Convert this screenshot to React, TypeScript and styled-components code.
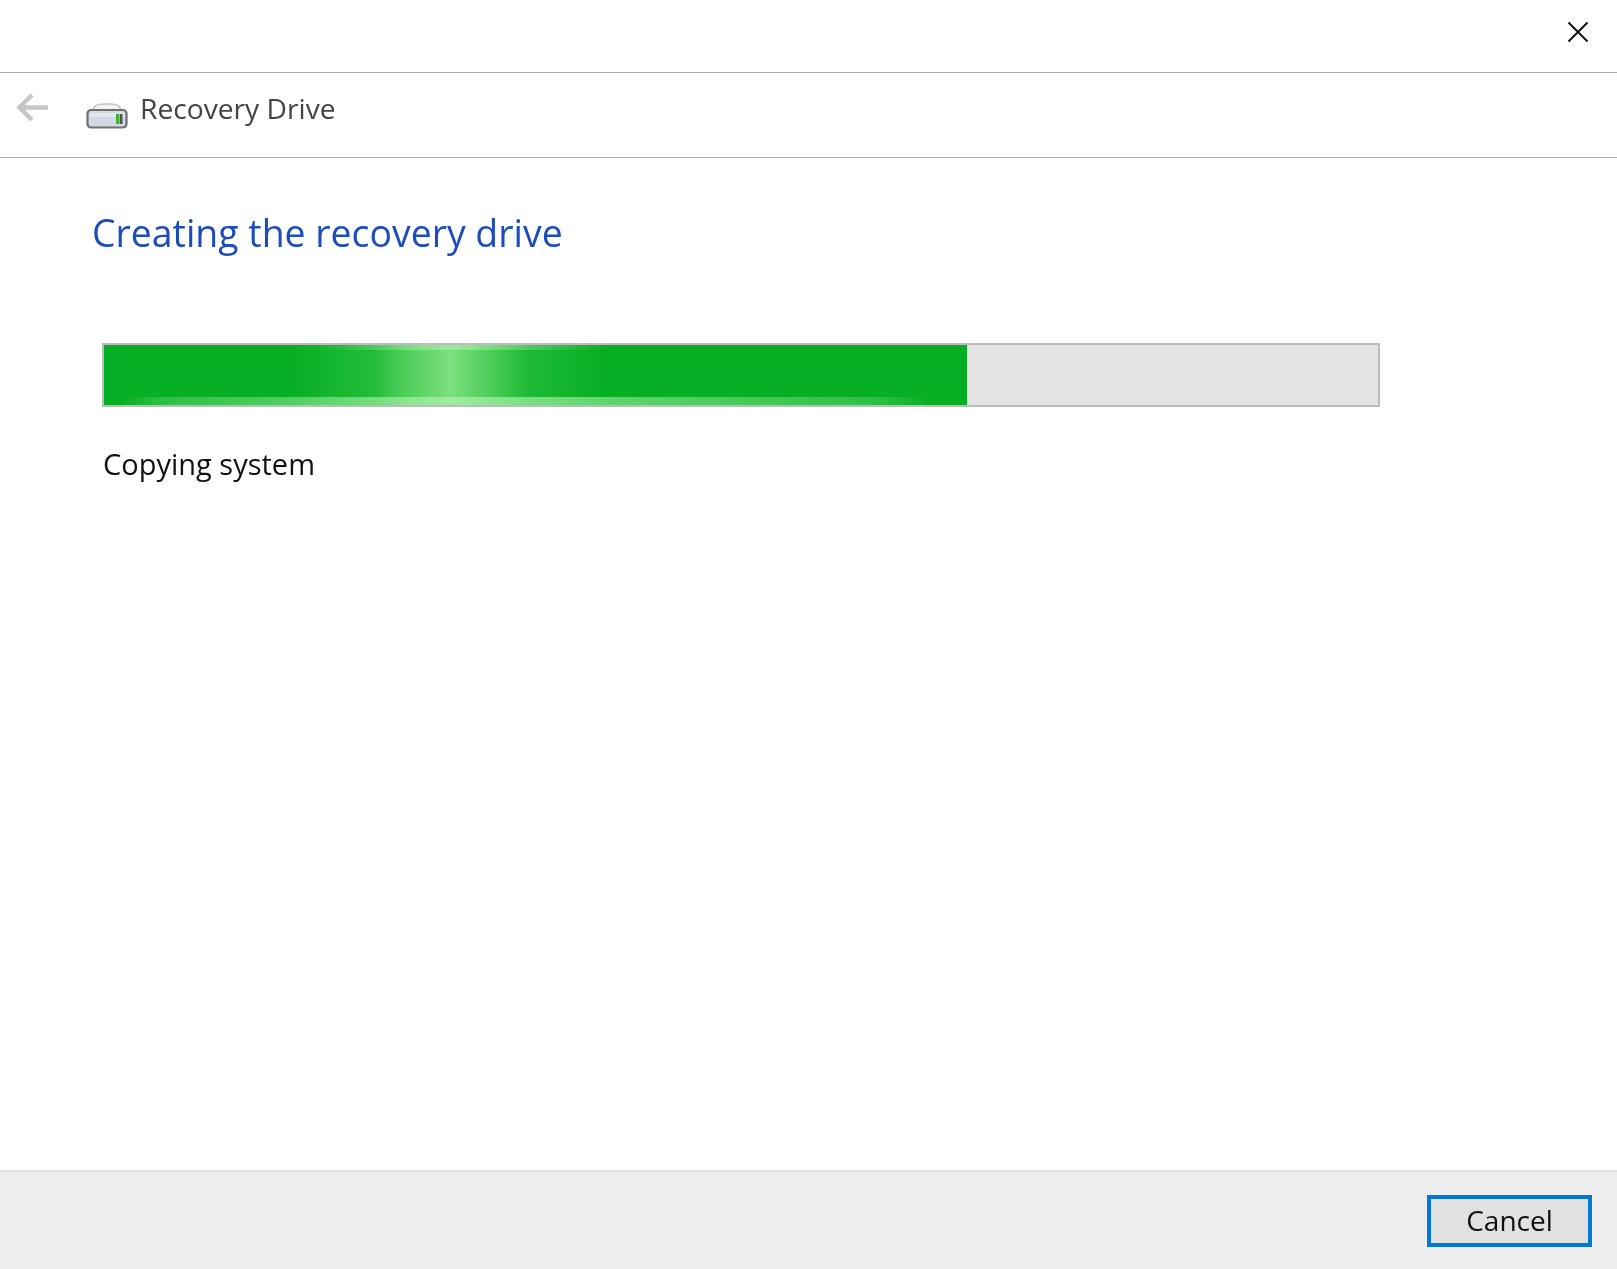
import React, { ReactElement } from 'react';
import styled, { createGlobalStyle } from 'styled-components';

const GlobalStyle = createGlobalStyle`
  html, body {
    margin: 0;
    padding: 0;
    background: #fff;
  }
`;

const Window = styled.div`
  width: 1617px;
  height: 1269px;
  display: flex;
  flex-direction: column;
  overflow: hidden;
  background: #fff;
  font-family: "Open Sans", "Noto Sans", sans-serif;
`;

const TitleBar = styled.header`
  height: 73px;
  flex: none;
  box-sizing: border-box;
  display: flex;
  justify-content: flex-end;
  align-items: center;
  padding: 0 28px 9px 0;
  border-bottom: 1px solid #aeaeae;
`;

const NavBar = styled.nav`
  height: 85px;
  flex: none;
  box-sizing: border-box;
  display: flex;
  align-items: flex-start;
  padding: 18px 0 0 16px;
  border-bottom: 1px solid #aeaeae;
`;

const BackIcon = styled.svg`
  margin: 1px 0 0;
  filter: blur(0.6px);
`;

const DriveIcon = styled.svg`
  margin: 12px 0 0 36px;
  filter: blur(0.7px);
`;

const WindowName = styled.span`
  margin: 0 0 0 12px;
  font-size: 28.2px;
  line-height: 34px;
  color: #444;
  filter: blur(0.6px);
`;

const Body = styled.main`
  flex: 1;
  display: flex;
  flex-direction: column;
  padding: 51px 0 0 92px;
`;

const Heading = styled.h1`
  margin: 0;
  font-size: 37.4px;
  line-height: 48px;
  font-weight: 400;
  color: #1d4dbd;
  filter: blur(0.6px);
`;

const Track = styled.div`
  margin: 86px 0 0 10px;
  width: 1278px;
  height: 64px;
  box-sizing: border-box;
  border: 2px solid #bcbcbc;
  background: #e4e4e4;
`;

const Fill = styled.div`
  height: 100%;
  filter: blur(0.6px);
  background:
    linear-gradient(90deg, transparent 215px, rgba(160, 240, 160, 0.7) 346px, transparent 500px) top / 100% 5px no-repeat,
    linear-gradient(90deg, transparent 18px, rgba(140, 230, 140, 0.3) 60px, rgba(170, 240, 170, 0.75) 346px, rgba(140, 230, 140, 0.3) 770px, transparent 825px) bottom / 100% 8px no-repeat,
    linear-gradient(90deg, transparent 190px, rgba(125, 225, 125, 0.25) 270px, rgba(125, 225, 125, 0.6) 300px, #7de07e 346px, rgba(125, 225, 125, 0.6) 385px, rgba(125, 225, 125, 0.2) 425px, transparent 500px),
    #07af24;
`;

const Status = styled.p`
  margin: 38px 0 0 11px;
  font-size: 29px;
  line-height: 38px;
  color: #111;
  filter: blur(0.5px);
`;

const Footer = styled.footer`
  height: 99px;
  flex: none;
  box-sizing: border-box;
  display: flex;
  justify-content: flex-end;
  align-items: flex-start;
  padding: 23px 25px 0 0;
  background: #eeeeee;
  border-top: 2px solid #e0e0e0;
`;

const CancelButton = styled.button`
  width: 165px;
  height: 52px;
  box-sizing: border-box;
  padding: 0 0 2px;
  border: 4px solid #0078d7;
  background: #e1e1e1;
  font-family: inherit;
  font-size: 28px;
  color: #111;
`;

const ButtonLabel = styled.span`
  display: block;
  filter: blur(0.5px);
`;

const App = (): ReactElement => (
  <Window>
    <GlobalStyle />
    <TitleBar>
      <svg width="22" height="22" viewBox="0 0 22 22" aria-label="Close">
        <path d="M1.5 1.5 20.5 20.5M20.5 1.5 1.5 20.5" stroke="#111" strokeWidth="2" fill="none" />
      </svg>
    </TitleBar>
    <NavBar>
      <BackIcon width="34" height="32" viewBox="0 0 34 32" aria-label="Back">
        <path
          d="M32 15.5H4M16 3 3.5 15.5 16 28"
          stroke="#c6c6c6"
          strokeWidth="4.5"
          fill="none"
        />
      </BackIcon>
      <DriveIcon width="42" height="26" viewBox="0 0 42 26">
        <path d="M7 7C8 2 12 1 21 1s13 1 14 6" fill="#f3f3f3" stroke="#c4c4c4" strokeWidth="1.5" />
        <rect x="1.5" y="7" width="39" height="17.5" rx="3.5" fill="#d4d7e4" stroke="#707070" strokeWidth="2.2" />
        <rect x="4" y="10" width="34" height="4" fill="#e6e8f2" />
        <rect x="30" y="11" width="3.5" height="10" fill="#3fb52d" />
        <rect x="34" y="11" width="2.5" height="10" fill="#555" />
      </DriveIcon>
      <WindowName>Recovery Drive</WindowName>
    </NavBar>
    <Body>
      <Heading>Creating the recovery drive</Heading>
      <Track>
        <Fill style={{ width: `${(863 / 1274) * 100}%` }} />
      </Track>
      <Status>Copying system</Status>
    </Body>
    <Footer>
      <CancelButton>
        <ButtonLabel>Cancel</ButtonLabel>
      </CancelButton>
    </Footer>
  </Window>
);

export default App;
